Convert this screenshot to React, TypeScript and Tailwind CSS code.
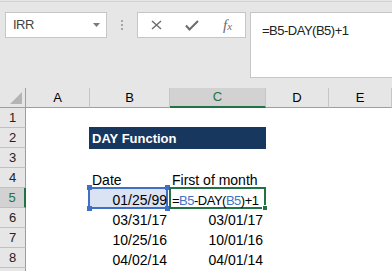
import React from "react";

const HEAD_BG = "bg-[#e6e6e6]";

function ColHeader({ label, selected }: { label: string; selected?: boolean }) {
  return (
    <div
      className={
        selected
          ? "bg-[#d2d2d2] border-r border-r-[#c6c6c6] border-b-2 border-b-[#217346] flex items-center justify-center text-[13px] text-[#217346]"
          : "bg-[#e6e6e6] border-r border-r-[#c6c6c6] border-b border-b-[#9e9e9e] flex items-center justify-center text-[13px] text-black"
      }
    >
      {label}
    </div>
  );
}

function RowHeader({ n, selected }: { n?: number; selected?: boolean }) {
  return (
    <div
      className={
        selected
          ? "bg-[#d2d2d2] border-b border-b-[#c0c0c0] border-r-2 border-r-[#217346] flex items-center justify-center text-[13px] text-[#217346]"
          : "bg-[#e6e6e6] border-b border-b-[#c0c0c0] border-r border-r-[#9e9e9e] flex items-center justify-center text-[13px] text-[#222]"
      }
    >
      {n}
    </div>
  );
}

function Cell({ children, right }: { children?: React.ReactNode; right?: boolean }) {
  return (
    <div
      className={
        "relative whitespace-nowrap text-[14px] leading-[17px] pt-[4px] text-black " +
        (right ? "text-right pr-[3px]" : "pl-[2px]")
      }
    >
      {children}
    </div>
  );
}

export default function App() {
  const data: [string, string][] = [
    ["03/31/17", "03/01/17"],
    ["10/25/16", "10/01/16"],
    ["04/02/14", "04/01/14"],
  ];
  return (
    <div className="w-[392px] h-[271px] overflow-hidden bg-white font-['Liberation_Sans',Arial,sans-serif]">
      {/* toolbar / formula bar */}
      <div className={"h-[88px] pt-px " + HEAD_BG}>
        <div className="h-px bg-[#d2d2d2]" />
        <div className="flex items-start pt-[10px] pl-[5px]">
          <div className="w-[102px] h-[26px] bg-white border border-[#c6c6c6] flex items-center justify-between pl-[7px] pr-[6px]">
            <span className="text-[13px] text-[#444] tracking-[-0.5px] leading-[16px]">IRR</span>
            <svg width="7" height="4" viewBox="0 0 7 4">
              <path d="M0 0H7L3.5 4Z" fill="#7a7a7a" />
            </svg>
          </div>
          <div className="w-[30px] h-[26px] flex flex-col items-center justify-center gap-[2px]">
            <div className="w-[2px] h-[2px] bg-[#a6a6a6]" />
            <div className="w-[2px] h-[2px] bg-[#a6a6a6]" />
            <div className="w-[2px] h-[2px] bg-[#a6a6a6]" />
          </div>
          <div className="w-[109px] h-[26px] bg-white border border-[#c6c6c6] flex items-center pl-[13px]">
            <svg width="11" height="10" viewBox="0 0 11 10">
              <path d="M1 1L10 9M10 1L1 9" stroke="#6b6b6b" strokeWidth="1.4" fill="none" />
            </svg>
            <svg className="ml-[23px]" width="14" height="11" viewBox="0 0 14 11">
              <path d="M1 5.5L4.5 9.5L13 1" stroke="#6b6b6b" strokeWidth="2" fill="none" />
            </svg>
            <span className="ml-[24px] font-['Liberation_Serif',serif] italic text-[#6b6b6b] text-[15px] leading-[16px]">
              f<span className="text-[11px]">x</span>
            </span>
          </div>
          <div className="ml-[4px] flex-1 -mr-[2px] h-[66px] bg-white border border-[#c6c6c6] pl-[11px] pt-[5px]">
            <span className="text-[13px] leading-[16px] tracking-[-0.5px] text-[#222]">=B5-DAY(B5)+1</span>
          </div>
        </div>
      </div>

      {/* grid */}
      <div className="grid grid-cols-[26px_64px_80px_96px_63px_1fr] auto-rows-[20px]">
        <div className="bg-[#e6e6e6] border-r border-b border-[#9e9e9e] flex items-end justify-end pr-[3px] pb-[3px]">
          <svg width="12" height="12" viewBox="0 0 12 12">
            <path d="M12 0V12H0Z" fill="#b4b4b4" />
          </svg>
        </div>
        <ColHeader label="A" />
        <ColHeader label="B" />
        <ColHeader label="C" selected />
        <ColHeader label="D" />
        <ColHeader label="E" />

        {/* row 1 */}
        <RowHeader n={1} />
        <Cell />
        <Cell />
        <Cell />
        <Cell />
        <Cell />

        {/* row 2 */}
        <RowHeader n={2} />
        <Cell />
        <div className="col-span-2 -mt-px -ml-px h-[22px] bg-[#17375e] text-white font-bold text-[13px] leading-[16px] pt-[4px] pl-[3px] whitespace-nowrap">
          DAY Function
        </div>
        <Cell />
        <Cell />

        {/* row 3 */}
        <RowHeader n={3} />
        <Cell />
        <Cell />
        <Cell />
        <Cell />
        <Cell />

        {/* row 4 */}
        <RowHeader n={4} />
        <Cell />
        <Cell>Date</Cell>
        <Cell>First of month</Cell>
        <Cell />
        <Cell />

        {/* row 5 */}
        <RowHeader n={5} selected />
        <Cell />
        <div className="relative whitespace-nowrap text-[14px] leading-[17px] pt-[4px] text-right pr-[3px] text-black">
          <div className="absolute left-[-2px] top-[-1px] w-[80px] h-[22px]">
            <div className="absolute inset-0 border-2 border-[#3f6fc6] bg-[#dae3f3]" />
            <div className="absolute left-[-1px] top-[-2px] w-[5px] h-[5px] bg-[#3f6fc6]" />
            <div className="absolute right-[-2px] top-[-2px] w-[5px] h-[5px] bg-[#3f6fc6]" />
            <div className="absolute left-[-1px] bottom-[-2px] w-[5px] h-[5px] bg-[#3f6fc6]" />
            <div className="absolute right-[-2px] bottom-[-2px] w-[5px] h-[5px] bg-[#3f6fc6]" />
          </div>
          <span className="relative">01/25/99</span>
        </div>
        <div className="relative whitespace-nowrap text-[13px] leading-[17px] pt-[4px] pl-[2px] tracking-[-0.5px] text-black">
          <div className="absolute left-[-1px] top-[-1px] w-[97px] h-[22px] border-2 border-[#217346]" />
          <div className="absolute left-[92px] top-[17px] w-[6px] h-[6px] bg-[#217346] border border-white" />
          <span className="relative">
            =<span className="text-[#4472c4]">B5</span>-DAY(<span className="text-[#4472c4]">B5</span>)+1
          </span>
        </div>
        <Cell />
        <Cell />

        {data.map(([b, c], i) => (
          <React.Fragment key={i}>
            <RowHeader n={6 + i} />
            <Cell />
            <Cell right>{b}</Cell>
            <Cell right>{c}</Cell>
            <Cell />
            <Cell />
          </React.Fragment>
        ))}

        <RowHeader />
        <Cell />
        <Cell />
        <Cell />
        <Cell />
        <Cell />
      </div>
    </div>
  );
}
